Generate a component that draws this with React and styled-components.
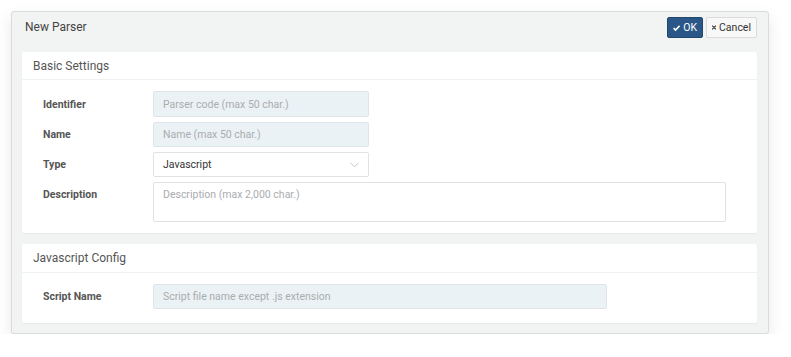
import React from "react";
import styled, { createGlobalStyle } from "styled-components";

const Global = createGlobalStyle`
  html, body { margin: 0; padding: 0; background: #fff; }
  body { font-family: Roboto, "Liberation Sans", Arial, sans-serif; }
  * { box-sizing: border-box; }
`;

const Page = styled.div`
  padding: 11px 0 0 11px;
`;

const Panel = styled.div`
  width: 758px;
  height: 323px;
  background: #f2f3f3;
  border: 1px solid #d9dcdc;
  border-radius: 3px;
  box-shadow: 0 6px 16px rgba(0, 0, 0, 0.09);
  display: flex;
  flex-direction: column;
`;

const PanelHeader = styled.div`
  height: 40px;
  display: flex;
  align-items: flex-start;
  justify-content: space-between;
  padding: 5px 11px 0 13px;
`;

const Title = styled.div`
  font-size: 12px;
  color: #444;
  padding-top: 3px;
`;

const Actions = styled.div`
  display: flex;
  gap: 3px;
`;

const Button = styled.button`
  height: 21px;
  padding: 0 5px;
  font-family: Roboto, "Liberation Sans", Arial, sans-serif;
  font-size: 10.5px;
  display: flex;
  align-items: center;
  gap: 3px;
  border-radius: 2px;
  cursor: pointer;
  background: ${(p) => (p.$primary ? "#2b5788" : "#f8f8f8")};
  color: ${(p) => (p.$primary ? "#fff" : "#333")};
  border: 1px solid ${(p) => (p.$primary ? "#22476f" : "#dcdcdc")};
  width: ${(p) => (p.$primary ? "36px" : "51px")};
`;

const Body = styled.div`
  display: flex;
  flex-direction: column;
  gap: 11px;
  padding: 0 11px 0 10px;
`;

const Card = styled.div`
  background: #fff;
  border-radius: 2px;
  box-shadow: 0 1px 2px rgba(0, 0, 0, 0.05);
  height: ${(p) => p.$h}px;
  display: flex;
  flex-direction: column;
`;

const CardHeader = styled.div`
  height: ${(p) => p.$h || 28}px;
  border-bottom: 1px solid #f0f1f1;
  display: flex;
  align-items: center;
  padding-left: 11px;
  font-size: 12px;
  color: #555;
`;

const CardBody = styled.div`
  padding: 11px 0 0 21px;
  display: flex;
  flex-direction: column;
  gap: 5px;
`;

const Row = styled.div`
  display: flex;
  align-items: ${(p) => (p.$top ? "flex-start" : "center")};
`;

const Label = styled.div`
  width: 110px;
  font-size: 10.5px;
  font-weight: 700;
  color: #555;
  padding-top: ${(p) => (p.$top ? "6px" : "0")};
`;

const Field = styled.div`
  width: ${(p) => p.$w}px;
  height: ${(p) => p.$h || 25}px;
  border: 1px solid ${(p) => (p.$filled ? "#dfe5e8" : "#e2e2e2")};
  background: ${(p) => (p.$filled ? "#ebf2f5" : "#fff")};
  border-radius: 2px;
  display: flex;
  align-items: ${(p) => (p.$top ? "flex-start" : "center")};
  justify-content: space-between;
  padding: ${(p) => (p.$top ? "5px 9px 0 9px" : "0 9px")};
  font-size: 10.5px;
  color: ${(p) => (p.$value ? "#333" : "#a9adaf")};
`;

const Chevron = () => (
  <svg width="9" height="6" viewBox="0 0 9 6" fill="none">
    <path d="M0.5 0.8 L4.5 4.8 L8.5 0.8" stroke="#c4c4c4" strokeWidth="1" />
  </svg>
);

const Check = () => (
  <svg width="9" height="8" viewBox="0 0 9 8">
    <path d="M0.8 4.2 L3.2 6.6 L8.2 1.4" stroke="#fff" strokeWidth="2" fill="none" />
  </svg>
);

const Cross = () => (
  <svg width="7" height="7" viewBox="0 0 7 7">
    <path d="M1 1 L6 6 M6 1 L1 6" stroke="#333" strokeWidth="2" strokeLinecap="square" />
  </svg>
);

export default function App() {
  return (
    <>
      <Global />
      <Page>
        <Panel>
          <PanelHeader>
            <Title>New Parser</Title>
            <Actions>
              <Button $primary>
                <Check />
                OK
              </Button>
              <Button>
                <Cross />
                Cancel
              </Button>
            </Actions>
          </PanelHeader>
          <Body>
            <Card $h={181}>
              <CardHeader>Basic Settings</CardHeader>
              <CardBody>
                <Row>
                  <Label>Identifier</Label>
                  <Field $w={216} $h={26} $filled>Parser code (max 50 char.)</Field>
                </Row>
                <Row>
                  <Label>Name</Label>
                  <Field $w={216} $filled>Name (max 50 char.)</Field>
                </Row>
                <Row>
                  <Label>Type</Label>
                  <Field $w={216} $value>
                    Javascript
                    <Chevron />
                  </Field>
                </Row>
                <Row $top>
                  <Label $top>Description</Label>
                  <Field $w={573} $h={40} $top>Description (max 2,000 char.)</Field>
                </Row>
              </CardBody>
            </Card>
            <Card $h={79}>
              <CardHeader $h={29}>Javascript Config</CardHeader>
              <CardBody>
                <Row>
                  <Label>Script Name</Label>
                  <Field $w={454} $filled>Script file name except .js extension</Field>
                </Row>
              </CardBody>
            </Card>
          </Body>
        </Panel>
      </Page>
    </>
  );
}
